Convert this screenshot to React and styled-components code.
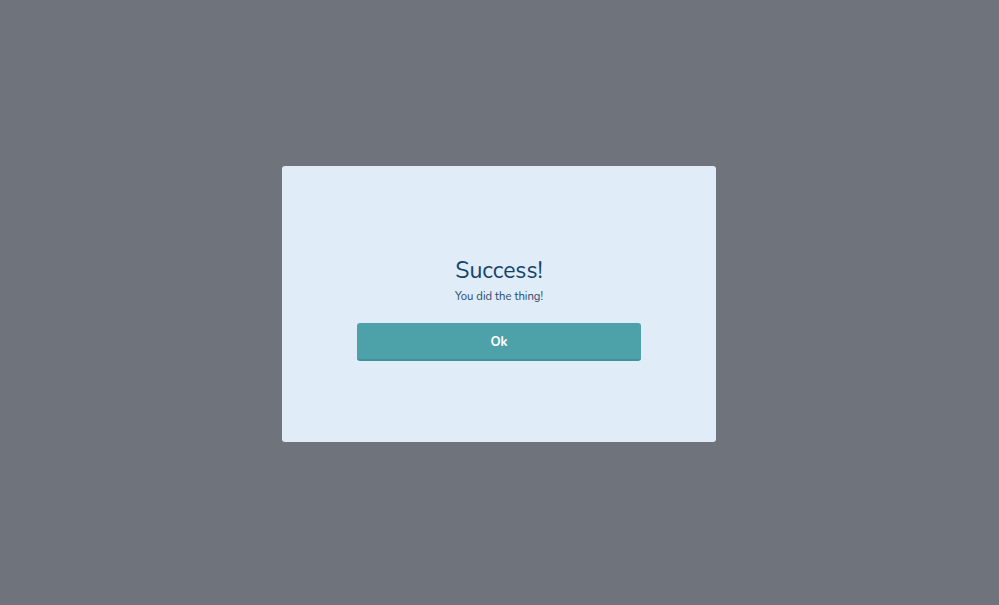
import React from "react";
import styled, { createGlobalStyle } from "styled-components";

const GlobalStyle = createGlobalStyle`
  html, body {
    margin: 0;
    padding: 0;
  }
  body {
    font-family: "Nunito", Lato, "Noto Sans", sans-serif;
  }
`;

const Overlay = styled.div`
  width: 100%;
  height: 605px;
  background-color: #6f737b;
  display: flex;
  align-items: center;
  justify-content: center;
  padding: 3px 1px 0 0;
  box-sizing: border-box;
`;

const Modal = styled.div`
  width: 434px;
  height: 276px;
  box-sizing: border-box;
  background-color: #e0ecf8;
  border-radius: 3px;
  display: flex;
  flex-direction: column;
  align-items: center;
  padding-top: 90px;
`;

const Title = styled.h2`
  margin: 0;
  font-size: 23px;
  line-height: 30px;
  font-weight: 400;
  color: #15426b;
`;

const Message = styled.p`
  margin: 3px 0 0;
  font-size: 11.3px;
  line-height: 16px;
  color: #284a68;
`;

const Button = styled.button`
  margin-top: 18px;
  width: 284px;
  height: 38px;
  border: none;
  border-bottom: 2px solid #3f939b;
  border-radius: 3px;
  background-color: #4da1a9;
  color: #ffffff;
  font-family: inherit;
  font-size: 13px;
  font-weight: 700;
  padding-top: 2px;
  cursor: pointer;
`;

function App() {
  return (
    <>
      <GlobalStyle />
      <Overlay>
        <Modal>
          <Title>Success!</Title>
          <Message>You did the thing!</Message>
          <Button>Ok</Button>
        </Modal>
      </Overlay>
    </>
  );
}

export default App;
